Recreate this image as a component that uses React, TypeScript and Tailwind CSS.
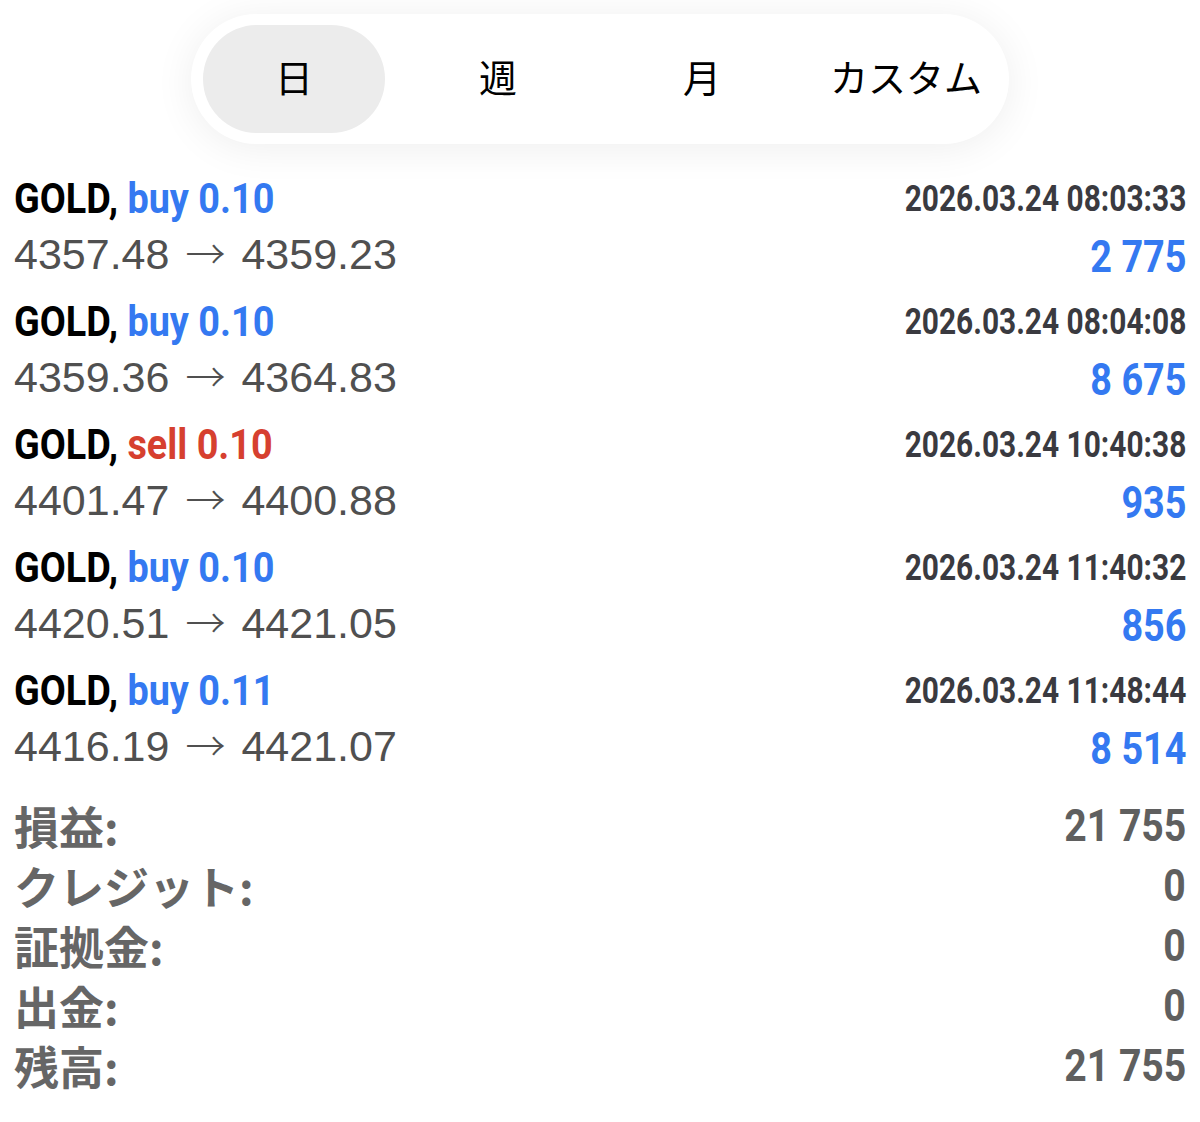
import React from "react";

const cond = "font-['Roboto',sans-serif] font-bold inline-block";
const reg = "font-['Liberation_Sans',sans-serif]";
const jp = "font-['Noto_Sans_CJK_JP',sans-serif]";

type Trade = {
  side: "buy" | "sell";
  lot: string;
  open: string;
  close: string;
  time: string;
  profit: string;
};

const trades: Trade[] = [
  { side: "buy", lot: "0.10", open: "4357.48", close: "4359.23", time: "2026.03.24 08:03:33", profit: "2 775" },
  { side: "buy", lot: "0.10", open: "4359.36", close: "4364.83", time: "2026.03.24 08:04:08", profit: "8 675" },
  { side: "sell", lot: "0.10", open: "4401.47", close: "4400.88", time: "2026.03.24 10:40:38", profit: "935" },
  { side: "buy", lot: "0.10", open: "4420.51", close: "4421.05", time: "2026.03.24 11:40:32", profit: "856" },
  { side: "buy", lot: "0.11", open: "4416.19", close: "4421.07", time: "2026.03.24 11:48:44", profit: "8 514" },
];

const summary = [
  { label: "損益:", value: "21 755" },
  { label: "クレジット:", value: "0" },
  { label: "証拠金:", value: "0" },
  { label: "出金:", value: "0" },
  { label: "残高:", value: "21 755" },
];

const tabs = ["日", "週", "月", "カスタム"];

export default function App() {
  return (
    <div className="w-[1200px] h-[1122px] bg-white overflow-hidden">
      <div className="flex justify-center pt-[14px]">
        <div className="w-[818px] h-[130px] rounded-full bg-white shadow-[0_4px_40px_rgba(0,0,0,0.07)] px-[12px] py-[11px]">
          <div className="grid grid-cols-4 gap-[22px] h-full">
            {tabs.map((t, i) => (
              <div
                key={t}
                className={`flex items-center justify-center rounded-full text-[38px] text-black ${jp} ${
                  i === 0 ? "bg-[#ececec]" : ""
                }`}
              >
                <span className="mb-[7px]">{t}</span>
              </div>
            ))}
          </div>
        </div>
      </div>

      <div className="px-[14px] mt-[26px]">
        {trades.map((tr, i) => (
          <div key={i}>
            <div className="flex items-center justify-between h-[57px]">
              <div className={`${cond} text-[42px] leading-none origin-left scale-x-[0.9] whitespace-nowrap`}>
                <span className="text-black">GOLD, </span>
                <span className={tr.side === "buy" ? "text-[#3479f1]" : "text-[#d6402f]"}>
                  {tr.side} {tr.lot}
                </span>
              </div>
              <div className={`${cond} text-[36px] leading-none text-[#3a3a40] origin-right scale-x-[0.83] whitespace-nowrap`}>
                {tr.time}
              </div>
            </div>
            <div className="flex items-center justify-between h-[66px]">
              <div className={`${reg} text-[43px] leading-none text-[#505050] mb-[12px] whitespace-nowrap`}>
                {tr.open}
                <span className={`${jp} font-light text-[40px] mx-[16px]`}>→</span>
                {tr.close}
              </div>
              <div className={`${cond} text-[45px] leading-none text-[#3479f1] origin-right scale-x-[0.84] mb-[8px] whitespace-nowrap`}>
                {tr.profit}
              </div>
            </div>
          </div>
        ))}

        <div className="mt-[10px]">
          {summary.map((s) => (
            <div key={s.label} className="flex items-center justify-between h-[60px]">
              <div className={`${jp} font-bold text-[45px] leading-none text-[#666666]`}>{s.label}</div>
              <div className={`${cond} text-[45px] leading-none text-[#5f5f5f] origin-right scale-x-[0.87] whitespace-nowrap`}>
                {s.value}
              </div>
            </div>
          ))}
        </div>
      </div>
    </div>
  );
}
